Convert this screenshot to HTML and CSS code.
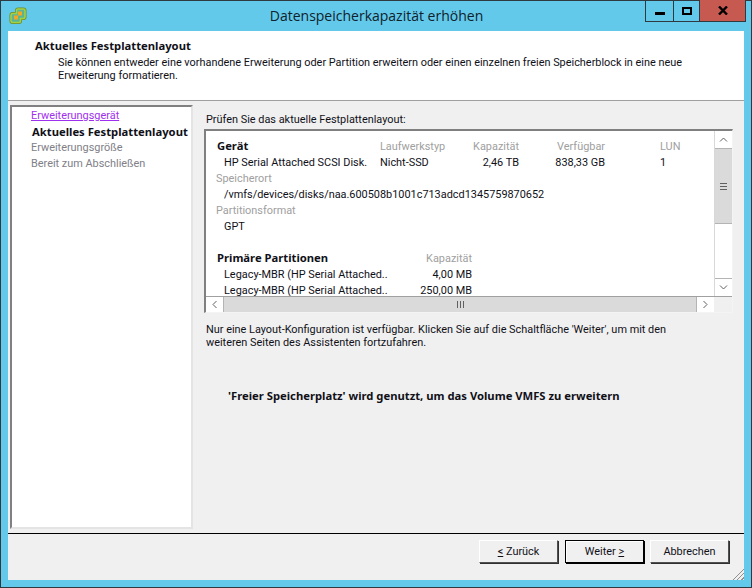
FILE: index.html
```html
<!DOCTYPE html>
<html lang="de">
<head>
    <meta charset="UTF-8">
    <title>Datenspeicherkapazität erhöhen</title>
    <link rel="stylesheet" href="styles.css">
</head>
<body>

<div class="window">
    <!-- Title bar -->
    <div class="titlebar">
        <svg class="app-icon" width="18" height="18" viewBox="0 0 18 18">
            <path d="M7.5 5 V3.5 Q7.5 2 9 2 H14.5 Q16 2 16 3.5 V10 Q16 11.5 14.5 11.5 H11.5 V14 Q11.5 15.5 10 15.5 H3.5 Q2 15.5 2 14 V8 Q2 6.5 3.5 6.5 H7.5 Z" fill="none" stroke="#6c8a2c" stroke-width="3"/>
            <path d="M7.5 5 V3.5 Q7.5 2 9 2 H14.5 Q16 2 16 3.5 V10 Q16 11.5 14.5 11.5 H11.5 V14 Q11.5 15.5 10 15.5 H3.5 Q2 15.5 2 14 V8 Q2 6.5 3.5 6.5 H7.5 Z" fill="#58b596" stroke="#a4d13f" stroke-width="1.6"/>
            <rect x="9" y="4.5" width="4" height="4" fill="#f5a623"/>
            <rect x="5" y="8.5" width="4" height="4" fill="#f5a623"/>
        </svg>
        <div class="title">Datenspeicherkapazität erhöhen</div>
        <div class="controls">
            <div class="ctl ctl-min"><span class="min-glyph"></span></div>
            <div class="ctl ctl-max"><span class="max-glyph"></span></div>
            <div class="ctl ctl-close">
                <svg width="10" height="9" viewBox="0 0 10 9"><path d="M1 0.5 L9 8.5 M9 0.5 L1 8.5" stroke="#000" stroke-width="2.4"/></svg>
            </div>
        </div>
    </div>

    <div class="client">
        <!-- Header -->
        <div class="header">
            <div class="header-title">Aktuelles Festplattenlayout</div>
            <p class="header-text">Sie können entweder eine vorhandene Erweiterung oder Partition erweitern oder einen einzelnen freien Speicherblock in eine neue Erweiterung formatieren.</p>
        </div>

        <div class="main">
            <!-- Wizard steps -->
            <div class="steps">
                <a class="step step-link" href="#">Erweiterungsgerät</a>
                <div class="step step-active">Aktuelles Festplattenlayout</div>
                <div class="step step-off">Erweiterungsgröße</div>
                <div class="step step-off">Bereit zum Abschließen</div>
            </div>

            <div class="content">
                <div class="prompt">Prüfen Sie das aktuelle Festplattenlayout:</div>

                <div class="listbox">
                    <div class="list-row">
                        <div class="list-view">
                            <div class="list-inner">
                                <div class="device-grid">
                                    <b>Gerät</b>
                                    <span class="muted">Laufwerkstyp</span>
                                    <span class="muted right">Kapazität</span>
                                    <span class="muted right">Verfügbar</span>
                                    <span class="muted lun">LUN</span>
                                    <span class="val">HP Serial Attached SCSI Disk.</span>
                                    <span>Nicht-SSD</span>
                                    <span class="right">2,46 TB</span>
                                    <span class="right">838,33 GB</span>
                                    <span class="lun lun-val">1</span>
                                </div>
                                <div class="muted caption">Speicherort</div>
                                <div class="val">/vmfs/devices/disks/naa.600508b1001c713adcd1345759870652</div>
                                <div class="muted caption">Partitionsformat</div>
                                <div class="val">GPT</div>
                                <div class="partition-grid">
                                    <b>Primäre Partitionen</b>
                                    <span class="muted right">Kapazität</span>
                                    <span class="val">Legacy-MBR (HP Serial Attached..</span>
                                    <span class="right">4,00 MB</span>
                                    <span class="val">Legacy-MBR (HP Serial Attached..</span>
                                    <span class="right">250,00 MB</span>
                                </div>
                            </div>
                        </div>
                        <div class="vscroll">
                            <div class="sb-btn sb-up"><svg width="9" height="5" viewBox="0 0 9 5"><path d="M1 4.5 L4.5 1 L8 4.5" fill="none" stroke="#606060"/></svg></div>
                            <div class="sb-thumb-v"><span class="grip-h"></span></div>
                            <div class="sb-track"></div>
                            <div class="sb-btn sb-down"><svg width="9" height="5" viewBox="0 0 9 5"><path d="M1 0.5 L4.5 4 L8 0.5" fill="none" stroke="#606060"/></svg></div>
                        </div>
                    </div>
                    <div class="hscroll">
                        <div class="sb-btn sb-left"><svg width="5" height="9" viewBox="0 0 5 9"><path d="M4.5 1 L1 4.5 L4.5 8" fill="none" stroke="#606060"/></svg></div>
                        <div class="sb-thumb-h"><span class="grip-v"></span></div>
                        <div class="sb-btn sb-right"><svg width="5" height="9" viewBox="0 0 5 9"><path d="M0.5 1 L4 4.5 L0.5 8" fill="none" stroke="#606060"/></svg></div>
                        <div class="sb-corner"></div>
                    </div>
                </div>

                <p class="note">Nur eine Layout-Konfiguration ist verfügbar. Klicken Sie auf die Schaltfläche 'Weiter', um mit den weiteren Seiten des Assistenten fortzufahren.</p>
                <p class="summary">'Freier Speicherplatz' wird genutzt, um das Volume VMFS zu erweitern</p>
            </div>
        </div>

        <!-- Buttons -->
        <div class="footer">
            <button class="btn btn-back"><u>&lt;</u> Zurück</button>
            <button class="btn btn-default">Weiter <u>&gt;</u></button>
            <button class="btn">Abbrechen</button>
            <div class="resize-grip"></div>
        </div>
    </div>
</div>

</body>
</html>
```

FILE: styles.css
```css
html, body {
    margin: 0;
    padding: 0;
}
body {
    font-family: Roboto, Tahoma, sans-serif;
    font-size: 10.9px;
    line-height: 16px;
    color: #101018;
}
b, .header-title, .step-active, .summary {
    font-family: "Noto Sans", Tahoma, sans-serif;
    font-size: 11.25px;
    font-weight: bold;
}
b {
    margin-top: -1px;
}
p {
    margin: 0;
}
.window {
    position: relative;
    box-sizing: border-box;
    width: 752px;
    height: 588px;
    padding: 0 7px 7px 7px;
    background-color: #63c9ea;
    border: 1px solid #2e3a40;
    display: flex;
    flex-direction: column;
}
.titlebar {
    height: 30px;
    flex: none;
    display: flex;
    align-items: flex-start;
}
.app-icon {
    margin: 6px 0 0 1px;
}
.title {
    flex: 1;
    text-align: center;
    font-family: "Open Sans", sans-serif;
    font-size: 14px;
    line-height: 30px;
    color: #10222c;
    margin-left: -18px;
}
.controls {
    position: absolute;
    top: -1px;
    right: 5px;
    display: flex;
    height: 21px;
    border: 1px solid #2e3a40;
    border-top: none;
}
.ctl {
    display: flex;
    align-items: center;
    justify-content: center;
    height: 21px;
    border-right: 1px solid #2e3a40;
}
.ctl-min {
    width: 27px;
}
.ctl-max {
    width: 25px;
}
.ctl-close {
    width: 45px;
    background-color: #c75a50;
    border-right: none;
}
.min-glyph {
    width: 10px;
    height: 3px;
    margin-top: 5px;
    background-color: #000;
}
.max-glyph {
    box-sizing: border-box;
    width: 10px;
    height: 8px;
    border: 2px solid #000;
}
.client {
    position: relative;
    flex: 1;
    min-height: 0;
    display: flex;
    flex-direction: column;
    background-color: #f0f0f0;
}
.header {
    height: 70px;
    flex: none;
    box-sizing: border-box;
    padding: 7px 0 0 27px;
    background-color: #fff;
    border-bottom: 1px solid #a0a0a0;
    margin-left: 0;
}
.header-text {
    padding-left: 23px;
    width: 640px;
    line-height: 13px;
    margin-top: 2px;
}
.main {
    flex: 1;
    min-height: 0;
    display: flex;
    padding: 4px 0 4px 2px;
    border-bottom: 1px solid #000;
    height: 432px;
}
.steps {
    box-sizing: border-box;
    width: 183px;
    flex: none;
    padding: 1px 0 0 19px;
    background-color: #fff;
    border: 2px solid #e4e4e4;
    border-top-color: #808080;
    border-left-color: #808080;
}
.step {
    display: block;
    height: 16px;
    white-space: nowrap;
}
.step-link {
    color: #a030f0;
}
.step-active {
    padding-left: 1px;
    line-height: 15px;
}
.step-off {
    color: #808088;
}
.content {
    flex: 1;
    min-width: 0;
    padding: 7px 0 0 13px;
}
.prompt {
    height: 16px;
}
.listbox {
    box-sizing: border-box;
    width: 529px;
    height: 184px;
    margin: 1px 0 0 -2px;
    display: flex;
    flex-direction: column;
    background-color: #fff;
    border: 1px solid #f4f4f4;
    border-top: 2px solid #808080;
    border-left: 2px solid #808080;
}
.list-row {
    flex: 1;
    min-height: 0;
    display: flex;
}
.list-view {
    flex: 1;
    min-width: 0;
    overflow: hidden;
}
.list-inner {
    padding: 8px 0 0 11px;
}
.muted {
    color: #a0a0a0;
}
.caption {
    margin-left: -1px;
}
.right {
    text-align: right;
}
.val {
    padding-left: 7px;
    white-space: nowrap;
}
.device-grid {
    display: grid;
    grid-template-columns: 163px 80px 59px 86px auto;
    grid-auto-rows: 16px;
}
.lun {
    padding-left: 55px;
    white-space: nowrap;
}
.lun-val {
    color: #101018;
}
.partition-grid {
    display: grid;
    grid-template-columns: 175px 80px;
    grid-auto-rows: 16px;
    margin-top: 16px;
}
.vscroll {
    width: 17px;
    flex: none;
    display: flex;
    flex-direction: column;
    border-left: 1px solid #d8d8d8;
}
.sb-btn {
    flex: none;
    display: flex;
    align-items: center;
    justify-content: center;
    background-color: #fff;
}
.sb-up, .sb-down {
    height: 17px;
}
.sb-thumb-v {
    height: 76px;
    flex: none;
    display: flex;
    align-items: center;
    justify-content: center;
    background-color: #dadada;
    border-top: 1px solid #b4b4b4;
    border-bottom: 1px solid #b4b4b4;
    box-sizing: border-box;
}
.grip-h {
    width: 7px;
    height: 7px;
    background: repeating-linear-gradient(180deg, #606060 0 1px, #dadada 1px 3px);
}
.sb-track {
    flex: 1;
    background-color: #fff;
}
.sb-down {
    border-top: 1px solid #b4b4b4;
}
.hscroll {
    height: 16px;
    flex: none;
    display: flex;
    border-top: 1px solid #a0a0a0;
    box-sizing: border-box;
}
.sb-left {
    width: 17px;
    border-right: 1px solid #b4b4b4;
}
.sb-thumb-h {
    flex: 1;
    display: flex;
    align-items: center;
    justify-content: center;
    background-color: #dadada;
}
.grip-v {
    width: 7px;
    height: 7px;
    background: repeating-linear-gradient(90deg, #606060 0 1px, #dadada 1px 3px);
}
.sb-right {
    width: 17px;
    border-left: 1px solid #b4b4b4;
}
.sb-corner {
    width: 18px;
    flex: none;
    background-color: #f0f0f0;
}
.note {
    width: 500px;
    line-height: 13px;
    margin: 10px 0 0 0;
}
.summary {
    margin-top: 39px;
    padding-left: 22px;
}
.footer {
    position: relative;
    flex: none;
    height: 46px;
    box-sizing: border-box;
    display: flex;
    justify-content: flex-end;
    padding: 6px 15px 0 0;
    gap: 6px;
}
.btn {
    box-sizing: border-box;
    width: 79px;
    height: 23px;
    padding: 0;
    font: inherit;
    color: #101018;
    background-color: #f0f0f0;
    border: 1px solid;
    border-color: #fff #505050 #505050 #fff;
    box-shadow: 1px 1px 0 #303030;
}
.btn-back {
    margin-right: 1px;
}
.btn-default {
    border: 1px solid #000;
    box-shadow: 1px 1px 0 #000, inset 1px 1px 0 #fff;
}
.resize-grip {
    position: absolute;
    right: 0;
    bottom: 0;
    width: 13px;
    height: 13px;
    background: repeating-linear-gradient(135deg, #f0f0f0 0 1px, #909090 1px 2px, #f0f0f0 2px 3px);
    clip-path: polygon(100% 0, 100% 100%, 0 100%);
}
```
